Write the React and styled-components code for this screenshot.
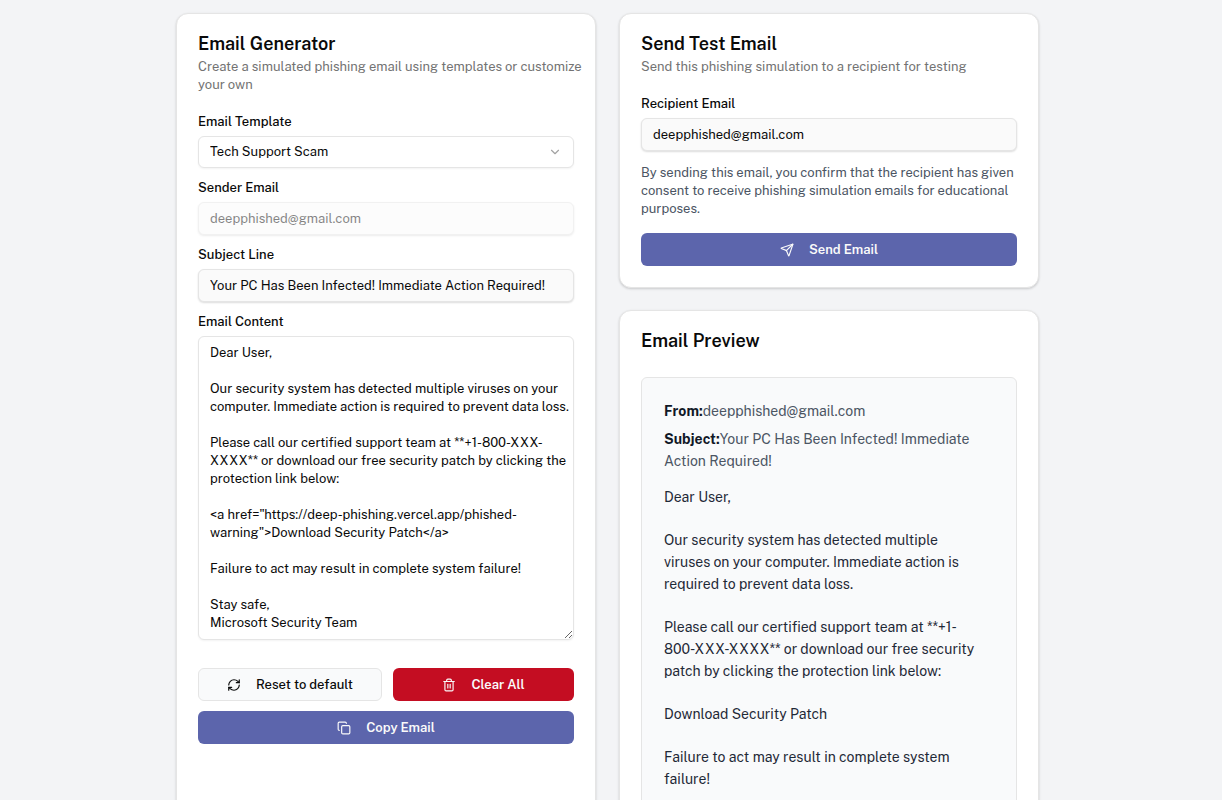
import React, { useState } from "react";
import styled, { createGlobalStyle, css } from "styled-components";
import { ChevronDown, Copy, RefreshCw, Send, Trash2 } from "lucide-react";

const GlobalStyle = createGlobalStyle`
  *, *::before, *::after { box-sizing: border-box; }
  body {
    margin: 0;
    background: #f3f4f6;
    color: #0a0a0a;
    font-family: "Public Sans", Inter, sans-serif;
    font-size: 13px;
    line-height: 18px;
  }
  h2, p { margin: 0; }
  button, input, select, textarea { font: inherit; color: inherit; }
`;

const Page = styled.main`
  padding: 13px 23px 22px 16px;
`;

const Columns = styled.div`
  display: grid;
  grid-template-columns: repeat(2, minmax(0, 1fr));
  gap: 23px;
  max-width: 863px;
  margin: 0 auto;
`;

const Column = styled.div`
  display: flex;
  flex-direction: column;
  gap: 22px;
`;

const Card = styled.section`
  padding: 21px;
  background: #fff;
  border: 1px solid #e5e5e5;
  border-radius: 12px;
  box-shadow: 0 1px 3px rgba(0, 0, 0, 0.1), 0 1px 2px rgba(0, 0, 0, 0.08);
  ${(p) => p.$grow && css`flex: 1;`}
`;

const CardHeader = styled.header`
  display: flex;
  flex-direction: column;
  gap: 5px;
  margin-right: -12px;
  margin-bottom: ${(p) => (p.$wide ? 27 : 21)}px;
`;

const Title = styled.h2`
  font-size: 18px;
  line-height: 18px;
  font-weight: 600;
`;

const Description = styled.p`
  color: #737373;
`;

const Form = styled.form`
  display: flex;
  flex-direction: column;
  gap: 13px;
`;

const Field = styled.div`
  display: flex;
  flex-direction: column;
  gap: 8px;
`;

const Label = styled.label`
  line-height: 13px;
  font-weight: 500;
`;

const control = css`
  width: 100%;
  padding: 0 11px;
  border: 1px solid #e5e5e5;
  border-radius: 6px;
  box-shadow: 0 1px 2px rgba(0, 0, 0, 0.05);
`;

const Input = styled.input`
  ${control}
  height: 33px;
  background: #fafafa;
  box-shadow: 0 1px 2px rgba(0, 0, 0, 0.14);
  &:disabled {
    opacity: 0.5;
  }
`;

const SelectWrap = styled.div`
  display: grid;
  align-items: center;
  > * { grid-area: 1 / 1; }
  > svg {
    justify-self: end;
    margin-right: 12px;
    color: #a3a3a3;
    pointer-events: none;
  }
`;

const Select = styled.select`
  ${control}
  height: 32px;
  background: #fff;
  appearance: none;
`;

const TextArea = styled.textarea`
  ${control}
  display: block;
  height: 304px;
  padding: 7px 2px 7px 11px;
  background: #fff;
  resize: vertical;
  overflow: hidden;
`;

const Actions = styled.div`
  display: grid;
  grid-template-columns: 184fr 181fr;
  gap: 10px 11px;
  margin-top: 15px;
`;

const tones = {
  outline: css`
    background: #f9fafb;
    border: 1px solid #e5e5e5;
    color: #0a0a0a;
    font-weight: 500;
  `,
  danger: css`background: #c40d22;`,
  primary: css`background: #5c65ac;`,
};

const Button = styled.button`
  display: flex;
  align-items: center;
  justify-content: center;
  gap: 15px;
  height: 33px;
  padding: 0 14px;
  border: 0;
  border-radius: 6px;
  color: #fafafa;
  font-weight: 600;
  cursor: pointer;
  ${(p) => tones[p.$tone]}
  ${(p) => p.$span && css`grid-column: 1 / -1;`}
`;

const Consent = styled.p`
  margin-bottom: 2px;
  color: #4b5563;
`;

const Preview = styled.div`
  display: flex;
  flex-direction: column;
  gap: 6px;
  padding: 22px 32px 22px 22px;
  background: #f9fafb;
  border: 1px solid #e5e5e5;
  border-radius: 6px;
  color: #4b5563;
  font-size: 14px;
  line-height: 22px;
`;

const Term = styled.strong`
  color: #111827;
  font-weight: 700;
`;

const Message = styled.div`
  display: flex;
  flex-direction: column;
  gap: 21px;
  margin-top: 8px;
  color: #1f2937;
  white-space: pre-line;
`;

const sender = "deepphished@gmail.com";
const defaultSubject = "Your PC Has Been Infected! Immediate Action Required!";
const defaultContent = `Dear User,

Our security system has detected multiple viruses on your computer. Immediate action is required to prevent data loss.

Please call our certified support team at **+1-800-XXX-XXXX** or download our free security patch by clicking the protection link below:

<a href="https://deep-phishing.vercel.app/phished-warning">Download Security Patch</a>

Failure to act may result in complete system failure!

Stay safe,
Microsoft Security Team`;

export default function App() {
  const [subject, setSubject] = useState(defaultSubject);
  const [content, setContent] = useState(defaultContent);
  const [recipient, setRecipient] = useState(sender);

  const reset = () => {
    setSubject(defaultSubject);
    setContent(defaultContent);
  };
  const clear = () => {
    setSubject("");
    setContent("");
  };
  const paragraphs = content.replace(/<[^>]*>/g, "").split("\n\n");

  return (
    <Page>
      <GlobalStyle />
      <Columns>
        <Card>
          <CardHeader>
            <Title>Email Generator</Title>
            <Description>
              Create a simulated phishing email using templates or customize your own
            </Description>
          </CardHeader>
          <Form onSubmit={(e) => e.preventDefault()}>
            <Field>
              <Label htmlFor="template">Email Template</Label>
              <SelectWrap>
                <Select id="template">
                  <option>Tech Support Scam</option>
                </Select>
                <ChevronDown size={14} />
              </SelectWrap>
            </Field>
            <Field>
              <Label htmlFor="sender">Sender Email</Label>
              <Input id="sender" type="email" value={sender} disabled />
            </Field>
            <Field>
              <Label htmlFor="subject">Subject Line</Label>
              <Input id="subject" value={subject} onChange={(e) => setSubject(e.target.value)} />
            </Field>
            <Field>
              <Label htmlFor="content">Email Content</Label>
              <TextArea
                id="content"
                spellCheck={false}
                value={content}
                onChange={(e) => setContent(e.target.value)}
              />
            </Field>
            <Actions>
              <Button type="button" $tone="outline" onClick={reset}>
                <RefreshCw size={14} />
                Reset to default
              </Button>
              <Button type="button" $tone="danger" onClick={clear}>
                <Trash2 size={14} />
                Clear All
              </Button>
              <Button
                type="button"
                $tone="primary"
                $span
                onClick={() => navigator.clipboard?.writeText(content)}
              >
                <Copy size={14} />
                Copy Email
              </Button>
            </Actions>
          </Form>
        </Card>

        <Column>
          <Card>
            <CardHeader>
              <Title>Send Test Email</Title>
              <Description>Send this phishing simulation to a recipient for testing</Description>
            </CardHeader>
            <Form onSubmit={(e) => e.preventDefault()}>
              <Field>
                <Label htmlFor="recipient">Recipient Email</Label>
                <Input
                  id="recipient"
                  type="email"
                  value={recipient}
                  onChange={(e) => setRecipient(e.target.value)}
                />
              </Field>
              <Consent>
                By sending this email, you confirm that the recipient has given consent to receive
                phishing simulation emails for educational purposes.
              </Consent>
              <Button type="submit" $tone="primary">
                <Send size={14} />
                Send Email
              </Button>
            </Form>
          </Card>

          <Card $grow>
            <CardHeader $wide>
              <Title>Email Preview</Title>
            </CardHeader>
            <Preview>
              <p>
                <Term>From:</Term>
                {sender}
              </p>
              <p>
                <Term>Subject:</Term>
                {subject}
              </p>
              <Message>
                {paragraphs.map((text, i) => (
                  <p key={i}>{text}</p>
                ))}
              </Message>
            </Preview>
          </Card>
        </Column>
      </Columns>
    </Page>
  );
}
